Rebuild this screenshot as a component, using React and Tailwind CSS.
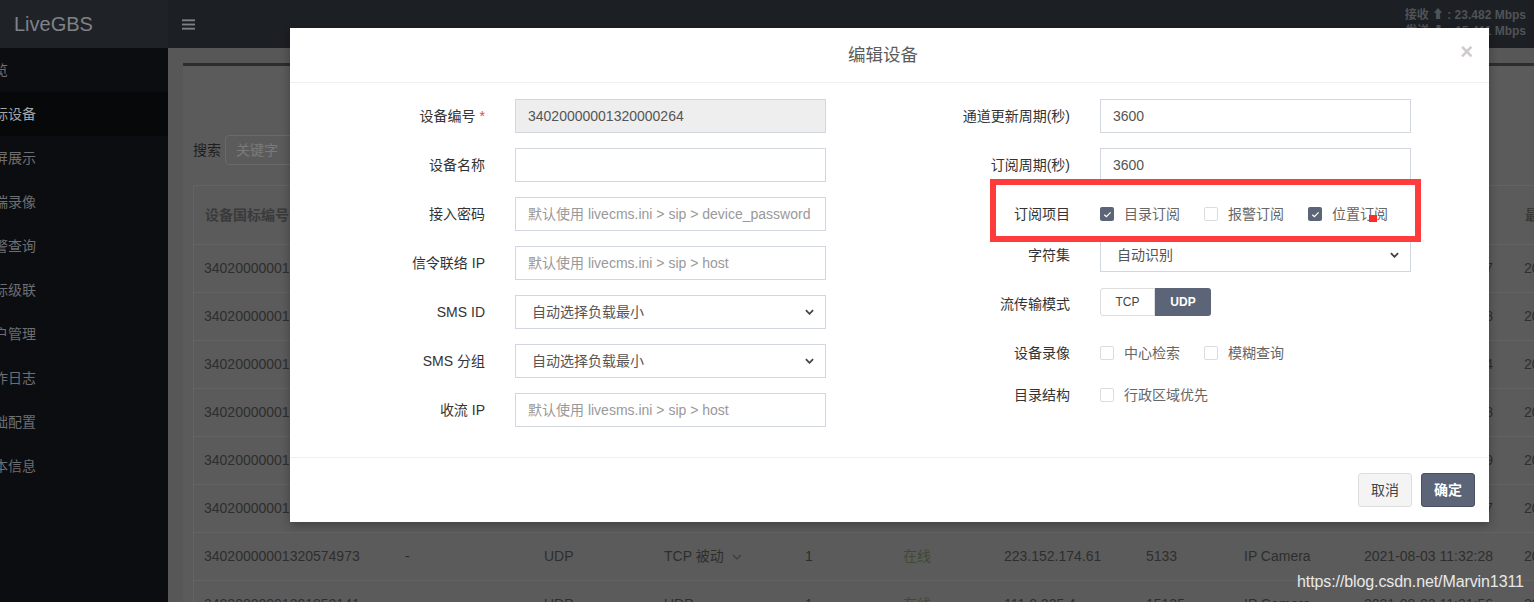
import React from 'react';

const menu = ['概览', '国标设备', '分屏展示', '云端录像', '报警查询', '国标级联', '用户管理', '操作日志', '基础配置', '版本信息'];

const cols = 'grid grid-cols-[201px_139px_120px_141px_98px_101px_142px_98px_120px_160px_200px]';

const rows = [
  ['34020000001320000017', '-', 'UDP', 'TCP 被动', '1', '在线', '223.152.174.61', '5133', 'IP Camera', '2021-08-03 11:32:27', '2021-08-03 11:32:27'],
  ['34020000001320000018', '-', 'UDP', 'TCP 被动', '1', '在线', '223.152.174.61', '5133', 'IP Camera', '2021-08-03 11:32:28', '2021-08-03 11:32:28'],
  ['34020000001320000264', '-', 'UDP', 'TCP 被动', '1', '在线', '223.152.174.61', '5133', 'IP Camera', '2021-08-03 11:32:24', '2021-08-03 11:32:24'],
  ['34020000001320000019', '-', 'UDP', 'TCP 被动', '1', '在线', '223.152.174.61', '5133', 'IP Camera', '2021-08-03 11:32:28', '2021-08-03 11:32:28'],
  ['34020000001320000020', '-', 'UDP', 'TCP 被动', '1', '在线', '223.152.174.61', '5133', 'IP Camera', '2021-08-03 11:32:29', '2021-08-03 11:32:29'],
  ['34020000001320000021', '-', 'UDP', 'TCP 被动', '1', '在线', '223.152.174.61', '5133', 'IP Camera', '2021-08-03 11:32:27', '2021-08-03 11:32:27'],
  ['34020000001320574973', '-', 'UDP', 'TCP 被动', '1', '在线', '223.152.174.61', '5133', 'IP Camera', '2021-08-03 11:32:28', '2021-08-03 11:32:28'],
  ['34020000001301852141', '-', 'UDP', 'UDP', '1', '在线', '111.0.225.4', '15135', 'IP Camera', '2021-08-03 11:31:56', '2021-08-03 11:31:56'],
];

const Chevron = ({ className }) => (
  <svg viewBox="0 0 10 6" className={className} fill="none" stroke="currentColor" strokeWidth="1.2">
    <path d="M1 1l4 4 4-4" />
  </svg>
);

const Check = ({ checked }) =>
  checked ? (
    <span className="w-[14px] h-[14px] rounded-[2px] bg-[#5b6577] flex items-center justify-center">
      <svg viewBox="0 0 10 10" className="w-[9px] h-[9px]" fill="none" stroke="#fff" strokeWidth="1.4">
        <path d="M1.5 5.2l2.2 2.2 4.8-4.8" />
      </svg>
    </span>
  ) : (
    <span className="w-[14px] h-[14px] rounded-[2px] border border-[#dcdcdc] bg-white" />
  );

const CheckItem = ({ checked, label }) => (
  <span className="flex items-center mr-[24px]">
    <Check checked={checked} />
    <span className="ml-[10px] text-[#666]">{label}</span>
  </span>
);

const Field = ({ label, required, h = 'mb-[15px]', children }) => (
  <div className={`flex items-start ${h}`}>
    <div className="w-[195px] text-right pt-[7px] leading-[20px] text-[#333] whitespace-nowrap">
      {label}
      {required && <span className="text-[#dd4b39] ml-[4px]">*</span>}
    </div>
    <div className="ml-[30px] w-[311px]">{children}</div>
  </div>
);

const Input = ({ value, placeholder, disabled }) => (
  <div
    className={`h-[34px] border border-[#d2d6de] px-[12px] flex items-center whitespace-nowrap overflow-hidden ${
      disabled ? 'bg-[#eeeeee]' : 'bg-white'
    }`}
  >
    {value ? <span className="text-[#555]">{value}</span> : <span className="text-[#999]">{placeholder}</span>}
  </div>
);

const Select = ({ value }) => (
  <div className="h-[34px] border border-[#d2d6de] pl-[16px] pr-[11px] flex items-center justify-between bg-white">
    <span className="text-[#555]">{value}</span>
    <svg viewBox="0 0 10 6" className="w-[9px] h-[6px] text-[#444]" fill="none" stroke="currentColor" strokeWidth="2">
      <path d="M1 1l4 4 4-4" />
    </svg>
  </div>
);

export default function App() {
  return (
    <div className="w-[1534px] h-[602px] overflow-hidden relative font-['Liberation_Sans','Noto_Sans_CJK_SC',sans-serif] text-[14px]">
      {/* top bar */}
      <div className="h-[48px] flex bg-[#1c1f23]">
        <div className="w-[168px] bg-[#1f2327] flex items-center pl-[14px] text-[20px] text-[#7f8287]">LiveGBS</div>
        <div className="flex-1 flex items-center justify-between pl-[14px] pr-[8px]">
          <svg viewBox="0 0 14 11" className="w-[13px] h-[11px] text-[#7d8085]" fill="currentColor">
            <rect x="0" y="0" width="14" height="2" />
            <rect x="0" y="4.5" width="14" height="2" />
            <rect x="0" y="9" width="14" height="2" />
          </svg>
          <div className="text-[12px] leading-[16px] text-[#505358] font-bold text-right -mt-[2px]">
            <div>接收 ⬆ : 23.482 Mbps</div>
            <div>发送 ⬇ : 15.411 Mbps</div>
          </div>
        </div>
      </div>

      <div className="flex h-[554px]">
        {/* sidebar */}
        <div className="w-[168px] bg-[#0c0d10] overflow-hidden">
          {menu.map((m, i) => (
            <div
              key={m}
              className={`h-[44px] flex items-center whitespace-nowrap ${
                i === 1 ? 'bg-[#07080a] text-[#a6a6a6]' : 'text-[#6c6e72]'
              }`}
            >
              <span className="ml-[-20px]">{m}</span>
            </div>
          ))}
        </div>

        {/* content */}
        <div className="flex-1 bg-[#575757] pl-[15px] pt-[15px] overflow-hidden">
          <div className="w-[1400px] h-[600px] bg-[#5b5b5b] border-t-[3px] border-[#2b2d31] px-[10px]">
            <div className="h-[69px]" />
            <div className="flex items-center h-[30px]">
              <span className="text-[#1e1e1e] mr-[4px]">搜索</span>
              <div className="w-[200px] h-[30px] border border-[#6a6a6a] rounded-[4px] flex items-center pl-[10px] text-[#7a7a7a]">
                关键字
              </div>
            </div>
            <div className="mt-[20px] border-l border-t border-[#636363]">
              <div className={`${cols} h-[59px] items-center pl-[11px] font-bold text-[#3a3a3a] border-b border-[#636363]`}>
                <span>设备国标编号</span>
                <span>设备名称</span>
                <span>信令传输</span>
                <span>流传输模式</span>
                <span>通道数</span>
                <span>在线状态</span>
                <span>出口IP</span>
                <span>端口</span>
                <span>厂家</span>
                <span>最后注册时间</span>
                <span>最后心跳时间</span>
              </div>
              {rows.map((r, i) => (
                <div key={i} className={`${cols} h-[48px] items-center pl-[10px] text-[#2e2e2e] border-b border-[#636363] whitespace-nowrap`}>
                  <span>{r[0]}</span>
                  <span>{r[1]}</span>
                  <span>{r[2]}</span>
                  <span className="flex items-center">
                    {r[3]}
                    <Chevron className="w-[10px] h-[6px] ml-[8px] text-[#3c3c3c]" />
                  </span>
                  <span>{r[4]}</span>
                  <span className="text-[#3f4a30]">{r[5]}</span>
                  <span>{r[6]}</span>
                  <span>{r[7]}</span>
                  <span>{r[8]}</span>
                  <span>{r[9]}</span>
                  <span>{r[10]}</span>
                </div>
              ))}
            </div>
          </div>
        </div>
      </div>

      {/* watermark */}
      <div className="absolute left-[1297px] top-[572px] text-[16px] text-[#e8e8e8] leading-[20px] tracking-[-0.1px]">
        https://blog.csdn.net/Marvin1311
      </div>

      {/* modal */}
      <div className="absolute left-[290px] top-[28px] w-[1199px] h-[494px] bg-white shadow-[0_3px_9px_rgba(0,0,0,0.3)] flex flex-col">
        <div className="h-[55px] border-b border-[#efefef] flex items-center relative">
          <div className="flex-1 text-center text-[17.5px] text-[#5c5c5c] pr-[13px]">编辑设备</div>
          <span className="absolute right-[16px] top-[12px] text-[22px] font-bold text-[#cccccc] leading-[24px]">×</span>
        </div>
        <div className="flex-1 pt-[16px] flex">
          <div className="w-[585px]">
            <Field label="设备编号" required>
              <Input value="34020000001320000264" disabled />
            </Field>
            <Field label="设备名称">
              <Input />
            </Field>
            <Field label="接入密码">
              <Input placeholder="默认使用 livecms.ini > sip > device_password" />
            </Field>
            <Field label="信令联络 IP">
              <Input placeholder="默认使用 livecms.ini > sip > host" />
            </Field>
            <Field label="SMS ID">
              <Select value="自动选择负载最小" />
            </Field>
            <Field label="SMS 分组">
              <Select value="自动选择负载最小" />
            </Field>
            <Field label="收流 IP">
              <Input placeholder="默认使用 livesms.ini > sip > host" />
            </Field>
          </div>
          <div className="w-[600px]">
            <Field label="通道更新周期(秒)">
              <Input value="3600" />
            </Field>
            <Field label="订阅周期(秒)">
              <Input value="3600" />
            </Field>
            <Field label="订阅项目" h="h-[41px]">
              <div className="flex items-center pt-[10px] leading-[14px] whitespace-nowrap">
                <CheckItem checked label="目录订阅" />
                <CheckItem label="报警订阅" />
                <CheckItem checked label="位置订阅" />
              </div>
            </Field>
            <Field label="字符集">
              <Select value="自动识别" />
            </Field>
            <Field label="流传输模式" h="h-[49px]">
              <div className="flex mt-[1px] text-[12px]">
                <span className="h-[28px] w-[55px] border border-[#dddddd] rounded-l-[3px] flex items-center justify-center text-[#444]">TCP</span>
                <span className="h-[28px] w-[56px] bg-[#5b6577] rounded-r-[3px] flex items-center justify-center text-white font-bold">UDP</span>
              </div>
            </Field>
            <Field label="设备录像" h="h-[42px]">
              <div className="flex items-center pt-[10px] leading-[14px] whitespace-nowrap">
                <CheckItem label="中心检索" />
                <CheckItem label="模糊查询" />
              </div>
            </Field>
            <Field label="目录结构" h="h-[34px]">
              <div className="flex items-center pt-[10px] leading-[14px] whitespace-nowrap">
                <CheckItem label="行政区域优先" />
              </div>
            </Field>
          </div>
        </div>
        <div className="h-[65px] border-t border-[#efefef] flex items-center justify-end pr-[14px] gap-[9px]">
          <span className="h-[34px] w-[54px] border border-[#dddddd] bg-[#f4f4f4] rounded-[3px] flex items-center justify-center text-[#444]">取消</span>
          <span className="h-[34px] w-[54px] border border-[#485163] bg-[#5b6577] rounded-[3px] flex items-center justify-center text-white font-bold">确定</span>
        </div>
      </div>

      {/* red annotation */}
      <div className="absolute left-[990px] top-[179px] w-[431px] h-[63px] border-[6px] border-[#ff3b3b]" />
      <div className="absolute left-[1369px] top-[215px] w-[8px] h-[7px] bg-[#ff2a2a]" />
    </div>
  );
}
